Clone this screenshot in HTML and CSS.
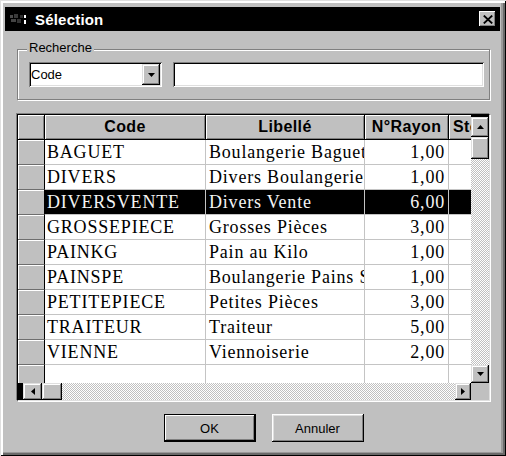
FILE: index.html
```html
<!DOCTYPE html>
<html lang="fr">
<head>
<meta charset="utf-8">
<title>Sélection</title>
<link rel="stylesheet" href="styles.css">
</head>
<body>
<div class="window">
  <div class="titlebar">
    <svg class="title-icon" width="22" height="16" viewBox="0 0 22 16">
      <rect x="1" y="4" width="3" height="3" fill="#4a4a4a"/>
      <rect x="5" y="3" width="4" height="4" fill="#3a3a3a"/>
      <rect x="2" y="8" width="5" height="3" fill="#444"/>
      <rect x="8" y="8" width="4" height="4" fill="#333"/>
      <rect x="11" y="4" width="3" height="3" fill="#2e2e2e"/>
      <rect x="15" y="4" width="2" height="3" fill="#fff"/>
      <rect x="15" y="9" width="2" height="4" fill="#fff"/>
    </svg>
    <span class="title-text">Sélection</span>
    <button class="close-btn" type="button" aria-label="Fermer">
      <svg width="10" height="9" viewBox="0 0 10 9"><path d="M0.8 0.6 L9.2 8.4 M9.2 0.6 L0.8 8.4" stroke="#000" stroke-width="1.9" fill="none"/></svg>
    </button>
  </div>

  <div class="content">
    <div class="group">
      <span class="group-label">Recherche</span>
      <div class="combo">
        <span class="combo-value">Code</span>
        <span class="combo-btn"><svg width="7" height="4" viewBox="0 0 7 4"><polygon points="0,0 7,0 3.5,4" fill="#000"/></svg></span>
      </div>
      <div class="textbox"></div>
    </div>

    <div class="grid">
      <div class="grid-main">
        <div class="table">
          <div class="row head">
            <div class="cell rh"></div>
            <div class="cell c-code">Code</div>
            <div class="cell c-lib">Libellé</div>
            <div class="cell c-ray">N°Rayon</div>
            <div class="cell c-su"><span class="clip">Stock</span></div>
          </div>
          <div class="row">
            <div class="cell rh"></div>
            <div class="cell c-code">BAGUET</div>
            <div class="cell c-lib"><span class="clip">Boulangerie Baguette</span></div>
            <div class="cell c-ray">1,00</div>
            <div class="cell c-su"></div>
          </div>
          <div class="row">
            <div class="cell rh"></div>
            <div class="cell c-code">DIVERS</div>
            <div class="cell c-lib"><span class="clip">Divers Boulangerie</span></div>
            <div class="cell c-ray">1,00</div>
            <div class="cell c-su"></div>
          </div>
          <div class="row sel">
            <div class="cell rh"></div>
            <div class="cell c-code">DIVERSVENTE</div>
            <div class="cell c-lib">Divers Vente</div>
            <div class="cell c-ray">6,00</div>
            <div class="cell c-su"></div>
          </div>
          <div class="row">
            <div class="cell rh"></div>
            <div class="cell c-code">GROSSEPIECE</div>
            <div class="cell c-lib">Grosses Pièces</div>
            <div class="cell c-ray">3,00</div>
            <div class="cell c-su"></div>
          </div>
          <div class="row">
            <div class="cell rh"></div>
            <div class="cell c-code">PAINKG</div>
            <div class="cell c-lib">Pain au Kilo</div>
            <div class="cell c-ray">1,00</div>
            <div class="cell c-su"></div>
          </div>
          <div class="row">
            <div class="cell rh"></div>
            <div class="cell c-code">PAINSPE</div>
            <div class="cell c-lib"><span class="clip">Boulangerie Pains Spéciaux</span></div>
            <div class="cell c-ray">1,00</div>
            <div class="cell c-su"></div>
          </div>
          <div class="row">
            <div class="cell rh"></div>
            <div class="cell c-code">PETITEPIECE</div>
            <div class="cell c-lib">Petites Pièces</div>
            <div class="cell c-ray">3,00</div>
            <div class="cell c-su"></div>
          </div>
          <div class="row">
            <div class="cell rh"></div>
            <div class="cell c-code">TRAITEUR</div>
            <div class="cell c-lib">Traiteur</div>
            <div class="cell c-ray">5,00</div>
            <div class="cell c-su"></div>
          </div>
          <div class="row">
            <div class="cell rh"></div>
            <div class="cell c-code">VIENNE</div>
            <div class="cell c-lib">Viennoiserie</div>
            <div class="cell c-ray">2,00</div>
            <div class="cell c-su"></div>
          </div>
          <div class="row">
            <div class="cell rh"></div>
            <div class="cell c-code"></div>
            <div class="cell c-lib"></div>
            <div class="cell c-ray"></div>
            <div class="cell c-su"></div>
          </div>
        </div>
        <div class="vscroll">
          <div class="sb-btn vs-up"><svg width="7" height="4" viewBox="0 0 7 4"><polygon points="3.5,0 7,4 0,4" fill="#000"/></svg></div>
          <div class="sb-thumb vs-thumb"></div>
          <div class="sb-track"></div>
          <div class="sb-btn vs-down"><svg width="7" height="4" viewBox="0 0 7 4"><polygon points="0,0 7,0 3.5,4" fill="#000"/></svg></div>
        </div>
      </div>
      <div class="grid-bottom">
        <div class="hscroll">
          <div class="hs-dark"></div>
          <div class="sb-btn hs-left"><svg width="4" height="7" viewBox="0 0 4 7"><polygon points="4,0 4,7 0,3.5" fill="#000"/></svg></div>
          <div class="sb-thumb hs-thumb"></div>
          <div class="sb-track"></div>
          <div class="sb-btn hs-right"><svg width="4" height="7" viewBox="0 0 4 7"><polygon points="0,0 4,3.5 0,7" fill="#000"/></svg></div>
        </div>
        <div class="corner"></div>
      </div>
    </div>

    <div class="buttons">
      <button class="btn default" type="button">OK</button>
      <button class="btn" type="button">Annuler</button>
    </div>
  </div>
</div>
</body>
</html>
```
FILE: styles.css
```css
* { box-sizing: border-box; }
html, body { margin: 0; padding: 0; }
body {
  width: 506px;
  height: 456px;
  overflow: hidden;
  background: #c0c0c0;
  font-family: "Liberation Sans", Arial, sans-serif;
  color: #000;
}

.window {
  width: 506px;
  height: 456px;
  padding: 7px 6px 0 5px;
  display: flex;
  flex-direction: column;
  background: #c0c0c0;
  box-shadow:
    inset 1px 1px 0 #dfdfdf,
    inset -1px -1px 0 #000,
    inset 3px 3px 0 #fff,
    inset -3px -3px 0 #6a6a6a,
    inset -5px -4px 0 #9a9a9a;
}

/* Title bar */
.titlebar {
  height: 24px;
  flex-shrink: 0;
  background: #000;
  color: #fff;
  display: flex;
  align-items: center;
  padding: 0 4px;
}
.title-icon { flex-shrink: 0; margin-right: 4px; }
.title-text {
  flex: 1;
  font-weight: bold;
  font-size: 15px;
  letter-spacing: 0.2px;
}
.close-btn {
  width: 17px;
  height: 16px;
  padding: 0;
  border: 0;
  background: #c0c0c0;
  display: flex;
  align-items: center;
  justify-content: center;
  box-shadow:
    inset -1px -1px 0 #000,
    inset 1px 1px 0 #fff,
    inset -2px -2px 0 #808080;
}

/* Content */
.content {
  flex: 1;
  display: flex;
  flex-direction: column;
  padding: 0 10px 0 12px;
}

/* Group box */
.group {
  position: relative;
  margin-top: 18px;
  height: 51px;
  flex-shrink: 0;
  border: 1px solid #808080;
  box-shadow: inset 1px 1px 0 #fff, 1px 1px 0 #fff;
  display: flex;
  align-items: center;
  gap: 11px;
  padding: 0 5px 0 11px;
}
.group-label {
  position: absolute;
  top: -10px;
  left: 9px;
  padding: 0 2px;
  background: #c0c0c0;
  font-size: 13px;
  line-height: 16px;
  color: #000;
}

.combo {
  width: 133px;
  height: 25px;
  flex-shrink: 0;
  background: #fff;
  padding: 2px;
  display: flex;
  align-items: center;
  box-shadow:
    inset 1px 1px 0 #808080,
    inset -1px -1px 0 #fff,
    inset 2px 2px 0 #000,
    inset -2px -2px 0 #dfdfdf;
}
.combo-value {
  flex: 1;
  font-size: 13px;
  line-height: 21px;
}
.combo-btn {
  width: 18px;
  height: 21px;
  background: #c0c0c0;
  display: flex;
  align-items: center;
  justify-content: center;
  box-shadow:
    inset -1px -1px 0 #000,
    inset 1px 1px 0 #dfdfdf,
    inset -2px -2px 0 #808080,
    inset 2px 2px 0 #fff;
}
.textbox {
  flex: 1;
  height: 25px;
  background: #fff;
  box-shadow:
    inset 1px 1px 0 #808080,
    inset -1px -1px 0 #fff,
    inset 2px 2px 0 #000,
    inset -2px -2px 0 #dfdfdf;
}

/* Grid */
.grid {
  margin-top: 14px;
  height: 287px;
  flex-shrink: 0;
  border-top: 1px solid #000;
  border-left: 1px solid #000;
  border-right: 1px solid #dfdfdf;
  border-bottom: 1px solid #dfdfdf;
  box-shadow: -1px -1px 0 #808080, 1px 1px 0 #fff;
  background: #fff;
  display: flex;
  flex-direction: column;
}
.grid-main {
  height: 268px;
  display: flex;
}
.table {
  flex: 1;
  min-width: 0;
  overflow: hidden;
  display: flex;
  flex-direction: column;
}
.row {
  display: flex;
  height: 25px;
  flex-shrink: 0;
}
.cell {
  flex-shrink: 0;
  height: 25px;
  border-right: 1px solid #c4c4c4;
  border-bottom: 1px solid #c4c4c4;
  font-family: "Liberation Serif", "Times New Roman", serif;
  font-size: 18px;
  letter-spacing: 0.8px;
  line-height: 24px;
  white-space: nowrap;
  overflow: hidden;
  padding-left: 2px;
}
.clip {
  display: block;
  overflow: hidden;
  white-space: nowrap;
}
.rh {
  width: 27px;
  background: #c0c0c0;
  border-right: 1px solid #000;
  border-bottom: 1px solid #6e6e6e;
  box-shadow: inset 1px 1px 0 #fff;
}
.c-code { width: 161px; }
.c-lib { width: 159px; padding-left: 3px; }
.c-ray { width: 84px; text-align: right; padding-right: 3px; }
.c-su { width: 80px; }

.head .cell {
  background: #c0c0c0;
  border-right: 1px solid #000;
  border-bottom: 1px solid #000;
  box-shadow: inset 1px 1px 0 #fff, inset -1px -1px 0 #808080;
  font-family: "Liberation Sans", Arial, sans-serif;
  font-weight: bold;
  font-size: 16px;
  letter-spacing: 0.4px;
  text-align: center;
  padding: 0;
}
.head .c-su { text-align: left; padding-left: 4px; }

.sel .cell { background: #000; color: #f4f4f4; }
.sel .rh { background: #c0c0c0; }

/* Scrollbars */
.sb-track {
  flex: 1;
  background-color: #fff;
  background-image: repeating-conic-gradient(#c0c0c0 0 25%, #fff 0 50%);
  background-size: 2px 2px;
}
.sb-btn, .sb-thumb {
  flex-shrink: 0;
  background: #c0c0c0;
  display: flex;
  align-items: center;
  justify-content: center;
  box-shadow:
    inset -1px -1px 0 #000,
    inset 1px 1px 0 #dfdfdf,
    inset -2px -2px 0 #808080,
    inset 2px 2px 0 #fff;
}
.vscroll {
  width: 18px;
  flex-shrink: 0;
  display: flex;
  flex-direction: column;
  border-top: 2px solid #000;
}
.vs-up { height: 20px; }
.vs-thumb { height: 22px; }
.vs-down { height: 18px; }

.grid-bottom {
  height: 17px;
  display: flex;
}
.hscroll {
  flex: 1;
  display: flex;
}
.hs-dark { width: 5px; flex-shrink: 0; background: #000; }
.hs-left { width: 19px; }
.hs-thumb { width: 20px; }
.hs-right { width: 16px; }
.corner {
  width: 18px;
  flex-shrink: 0;
  background: #c0c0c0;
}

/* Buttons */
.buttons {
  display: flex;
  justify-content: center;
  gap: 16px;
  margin-top: 13px;
  padding-left: 20px;
}
.btn {
  width: 92px;
  height: 28px;
  padding: 0;
  border: 0;
  background: #c0c0c0;
  font-family: "Liberation Sans", Arial, sans-serif;
  font-size: 13px;
  color: #000;
  box-shadow:
    inset -1px -1px 0 #000,
    inset 1px 1px 0 #fff,
    inset -2px -2px 0 #808080,
    inset 2px 2px 0 #dfdfdf;
}
.btn.default {
  box-shadow:
    inset 0 0 0 1px #000,
    inset -2px -2px 0 #000,
    inset 2px 2px 0 #fff,
    inset -3px -3px 0 #808080;
}
```
